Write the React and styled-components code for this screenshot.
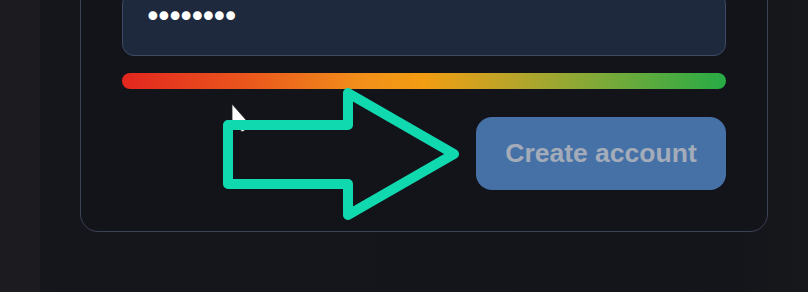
import React from "react";
import styled, { createGlobalStyle } from "styled-components";

const Global = createGlobalStyle`
  html, body { margin: 0; padding: 0; background: #16171c; overflow: hidden; }
  body { font-family: "Liberation Sans", Arial, sans-serif; }
`;

const Page = styled.div`
  position: relative;
  width: 808px;
  height: 292px;
  display: flex;
  overflow: hidden;
  background: #16171c;
`;

const SideStrip = styled.div`
  width: 40px;
  flex: none;
  background: #1c1c20;
`;

const Main = styled.div`
  flex: 1;
  padding-left: 40px;
  display: flex;
  align-items: flex-start;
  background: linear-gradient(90deg, #15161b 0%, #14151a 90%, #17181c 100%);
`;

const Card = styled.div`
  width: 688px;
  box-sizing: border-box;
  margin-top: -41px;
  padding: 32px 41px 41px 41px;
  border: 1px solid #3b4256;
  border-radius: 18px;
  background: #13141a;
  display: flex;
  flex-direction: column;
`;

const PasswordField = styled.div`
  height: 64px;
  box-sizing: border-box;
  border: 1px solid #3d4a63;
  border-radius: 12px;
  background: #1f293d;
  display: flex;
  align-items: center;
  padding: 0 0 14px 21px;
  color: #ffffff;
  overflow: hidden;
`;

const Dots = styled.span`
  font-family: "DejaVu Sans", sans-serif;
  font-size: 30px;
  letter-spacing: -6.6px;
  line-height: 24px;
  padding-right: 10px;
`;

const StrengthBar = styled.div`
  margin-top: 17px;
  height: 16px;
  border-radius: 8px;
  background: linear-gradient(90deg, #e3261f 0%, #ea5a1c 22%, #f2901a 40%, #f29d12 50%, #b8a52a 65%, #7aaa39 80%, #27ab45 100%);
`;

const Actions = styled.div`
  margin-top: 28px;
  display: flex;
  justify-content: flex-end;
`;

const Button = styled.button`
  width: 250px;
  height: 73px;
  border: none;
  border-radius: 16px;
  background: #4671a7;
  color: #a3acb8;
  font-family: "Liberation Sans", Arial, sans-serif;
  font-weight: 700;
  font-size: 26.5px;
  cursor: pointer;
`;

const Overlay = styled.svg`
  position: absolute;
  left: 0;
  top: 0;
  pointer-events: none;
`;

export default function App() {
  return (
    <>
      <Global />
      <Page>
        <SideStrip />
        <Main>
          <Card>
            <PasswordField>
              <Dots>••••••••</Dots>
            </PasswordField>
            <StrengthBar />
            <Actions>
              <Button>Create account</Button>
            </Actions>
          </Card>
        </Main>
        <Overlay width="808" height="292" viewBox="0 0 808 292">
          <path
            d="M232 104 L232 128 L237.5 122.5 L241.5 132 L245 130.5 L241 121 L247 121 Z"
            fill="#ffffff"
            stroke="#222"
            strokeWidth="0.8"
          />
          <path
            d="M228 125 L348 125 L348 93 L454 154 L348 215 L348 184 L228 184 Z"
            fill="none"
            stroke="#10d9b0"
            strokeWidth="10"
            strokeLinejoin="round"
          />
        </Overlay>
      </Page>
    </>
  );
}
